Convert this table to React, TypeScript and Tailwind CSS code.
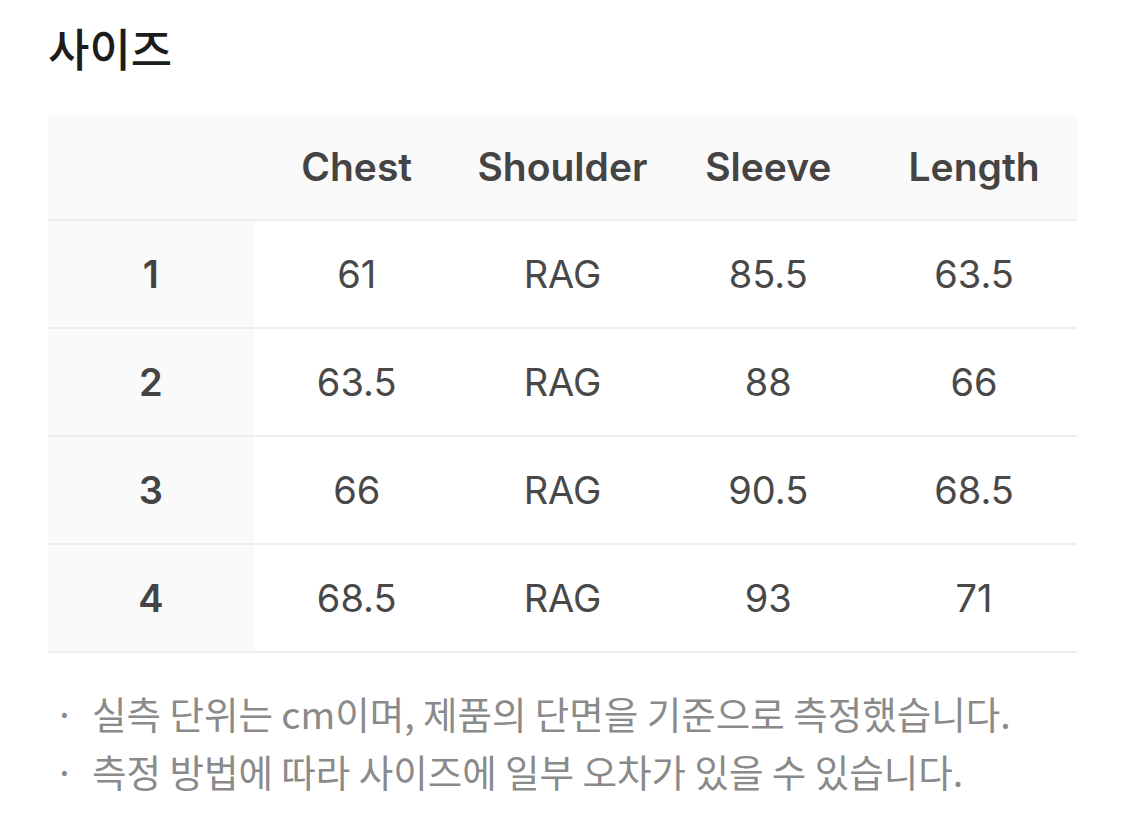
const headers = ["Chest", "Shoulder", "Sleeve", "Length"];

const rows = [
    { size: "1", values: ["61", "RAG", "85.5", "63.5"] },
    { size: "2", values: ["63.5", "RAG", "88", "66"] },
    { size: "3", values: ["66", "RAG", "90.5", "68.5"] },
    { size: "4", values: ["68.5", "RAG", "93", "71"] },
];

const notes = [
    "실측 단위는 cm이며, 제품의 단면을 기준으로 측정했습니다.",
    "측정 방법에 따라 사이즈에 일부 오차가 있을 수 있습니다.",
];

const latin = { fontFamily: 'Inter, "Noto Sans CJK KR", sans-serif' };
const korean = { fontFamily: '"Noto Sans CJK KR", Inter, sans-serif' };

export default function App() {
    return (
        <div className="min-h-screen bg-white px-12 pt-[22px]">
            {/* Title */}
            <h1 className="text-[45px] leading-[52px] font-medium text-[#1c1c1c]" style={korean}>
                사이즈
            </h1>

            {/* Size Table */}
            <div className="mt-[41px]" style={latin}>
                <div className="grid grid-cols-5 h-[106px] bg-[#fafafa] border-b-2 border-[#eeeeee]">
                    <div />
                    {headers.map((h) => (
                        <div key={h} className="flex items-center justify-center text-[39px] font-semibold text-[#444444]">
                            {h}
                        </div>
                    ))}
                </div>

                {rows.map((row) => (
                    <div key={row.size} className="grid grid-cols-5 h-[108px] border-b-2 border-[#eeeeee]">
                        <div className="flex items-center justify-center bg-[#fafafa] text-[38px] font-semibold text-[#444444]">
                            {row.size}
                        </div>
                        {row.values.map((v, i) => (
                            <div key={i} className="flex items-center justify-center text-[38px] text-[#484848]">
                                {v}
                            </div>
                        ))}
                    </div>
                ))}
            </div>

            {/* Notes */}
            <ul className="mt-[31px]" style={korean}>
                {notes.map((n) => (
                    <li key={n} className="flex text-[37.5px] leading-[58px] text-[#8a8a8a]">
                        <span className="w-[44px] shrink-0 pl-[6px]">·</span>
                        <span>{n}</span>
                    </li>
                ))}
            </ul>
        </div>
    );
}
